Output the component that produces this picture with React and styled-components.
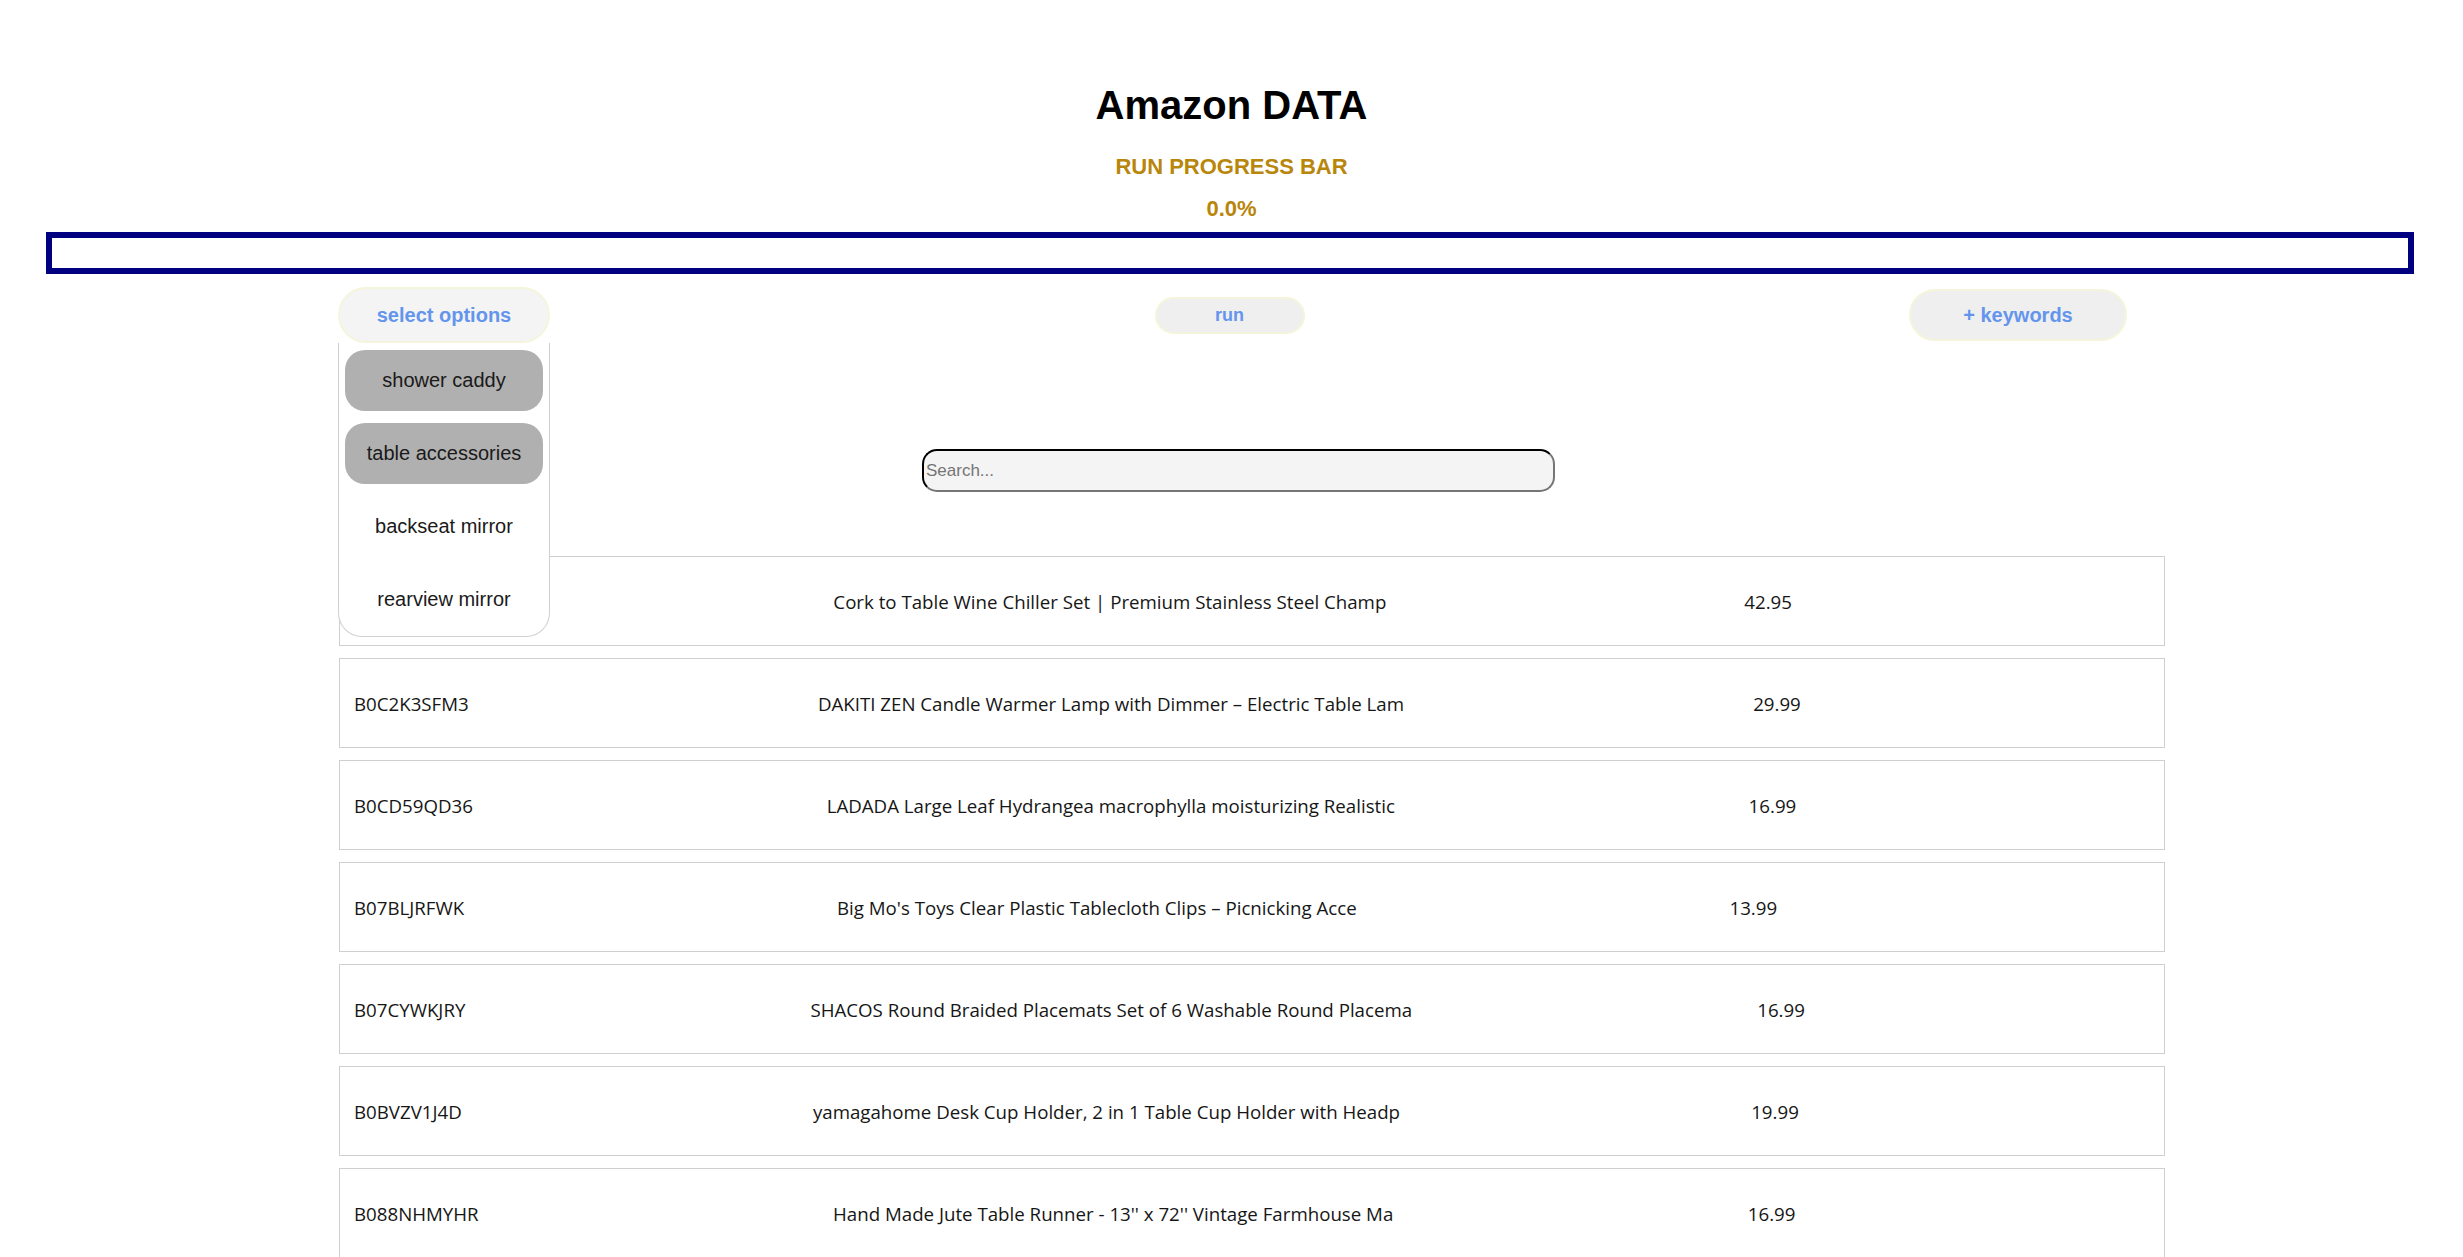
import React from 'react'
import styled, { createGlobalStyle } from 'styled-components'

const GlobalStyle = createGlobalStyle`
  body {
    margin: 0;
    background: #fff;
    font-family: 'Liberation Sans', Arial, sans-serif;
  }
`

const Page = styled.div`
  width: 2463px;
  min-height: 1257px;
  overflow: hidden;
`

const Title = styled.h1`
  margin: 82px 0 0;
  font-size: 40px;
  line-height: 46px;
  font-weight: bold;
  text-align: center;
  color: #000;
`

const Sub = styled.h3`
  margin: ${props => props.top}px 0 0;
  font-size: 22px;
  line-height: 26px;
  font-weight: bold;
  text-align: center;
  color: #b8860b;
`

const ProgressBar = styled.div`
  box-sizing: border-box;
  margin: 10px 0 0 46px;
  width: 2368px;
  height: 42px;
  border: 6px solid #000080;
  background: #fff;
`

const Fill = styled.div`
  height: 100%;
  background: #000080;
`

const Toolbar = styled.div`
  margin: 13px 0 0 338px;
  width: 1789px;
  height: 56px;
  display: flex;
  align-items: center;
  justify-content: space-between;
`

const Button = styled.button`
  box-sizing: border-box;
  width: ${props => props.w}px;
  height: ${props => props.h}px;
  border: 2px solid #f5f5dc;
  border-radius: ${props => props.h / 2}px;
  background: ${props => props.light ? '#f4f4f4' : '#efefef'};
  color: #6495ed;
  font-family: 'Liberation Sans', Arial, sans-serif;
  font-weight: 700;
  font-size: ${props => props.size}px;
  padding: 0;
  cursor: pointer;
`

const SelectWrap = styled.div`
  position: relative;
  width: 212px;
  height: 56px;
`

const Menu = styled.div`
  position: absolute;
  top: 56px;
  left: 0;
  z-index: 10;
  box-sizing: border-box;
  width: 212px;
  padding: 7px 6px 6px;
  background: #fff;
  border: 1px solid #d0d0d0;
  border-top: none;
  border-radius: 0 0 24px 24px;
  display: flex;
  flex-direction: column;
  gap: 12px;
`

const Option = styled.div`
  height: 61px;
  border-radius: 20px;
  background: ${props => props.selected ? '#b0b0b0' : 'transparent'};
  display: flex;
  align-items: center;
  justify-content: center;
  font-size: 20px;
  color: #1a1a1a;
`

const SearchRow = styled.div`
  margin: 106px 0 0 922px;
`

const Search = styled.input`
  box-sizing: border-box;
  width: 633px;
  height: 43px;
  padding: 0 2px;
  border: 2px inset #767676;
  border-top-color: #1a1a1a;
  border-left-color: #1a1a1a;
  border-radius: 15px;
  background: #f4f4f4;
  font-family: 'Liberation Sans', Arial, sans-serif;
  font-size: 17px;
  outline: none;

  &::placeholder {
    color: #757575;
  }
`

const List = styled.div`
  margin: 64px 0 0 339px;
  width: 1826px;
  display: flex;
  flex-direction: column;
  gap: 12px;
`

const Row = styled.div`
  box-sizing: border-box;
  height: 90px;
  padding: 0 14px;
  border: 1px solid #cfcfcf;
  display: flex;
  align-items: center;
  justify-content: space-between;
  font-family: 'Open Sans', 'Segoe UI', sans-serif;
  font-size: 18.7px;
  color: #161616;
`

const Cell = styled.span`
  white-space: nowrap;
`

const options = [
  { label: 'shower caddy', selected: true },
  { label: 'table accessories', selected: true },
  { label: 'backseat mirror', selected: false },
  { label: 'rearview mirror', selected: false },
]

const products = [
  ['B0C1RQ7WZK', 'Cork to Table Wine Chiller Set | Premium Stainless Steel Champ', '42.95'],
  ['B0C2K3SFM3', 'DAKITI ZEN Candle Warmer Lamp with Dimmer – Electric Table Lam', '29.99'],
  ['B0CD59QD36', 'LADADA Large Leaf Hydrangea macrophylla moisturizing Realistic', '16.99'],
  ['B07BLJRFWK', "Big Mo's Toys Clear Plastic Tablecloth Clips – Picnicking Acce", '13.99'],
  ['B07CYWKJRY', 'SHACOS Round Braided Placemats Set of 6 Washable Round Placema', '16.99'],
  ['B0BVZV1J4D', 'yamagahome Desk Cup Holder, 2 in 1 Table Cup Holder with Headp', '19.99'],
  ['B088NHMYHR', "Hand Made Jute Table Runner - 13'' x 72'' Vintage Farmhouse Ma", '16.99'],
]

const App = () => {
  const progress = 0

  return (
    <Page>
      <GlobalStyle />
      <Title>Amazon DATA</Title>
      <Sub top={26}>RUN PROGRESS BAR</Sub>
      <Sub top={16}>{progress.toFixed(1)}%</Sub>
      <ProgressBar>
        <Fill style={{ width: `${progress}%` }} />
      </ProgressBar>

      <Toolbar>
        <SelectWrap>
          <Button w={212} h={56} size={20} light>select options</Button>
          <Menu>
            {options.map(o => (
              <Option key={o.label} selected={o.selected}>{o.label}</Option>
            ))}
          </Menu>
        </SelectWrap>
        <Button w={150} h={37} size={18}>run</Button>
        <Button w={218} h={52} size={20}>+ keywords</Button>
      </Toolbar>

      <SearchRow>
        <Search placeholder='Search...' />
      </SearchRow>

      <List>
        {products.map(([id, title, price]) => (
          <Row key={id}>
            <Cell>{id}</Cell>
            <Cell>{title}</Cell>
            <Cell>{price}</Cell>
            <Cell />
          </Row>
        ))}
      </List>
    </Page>
  )
}

export default App
